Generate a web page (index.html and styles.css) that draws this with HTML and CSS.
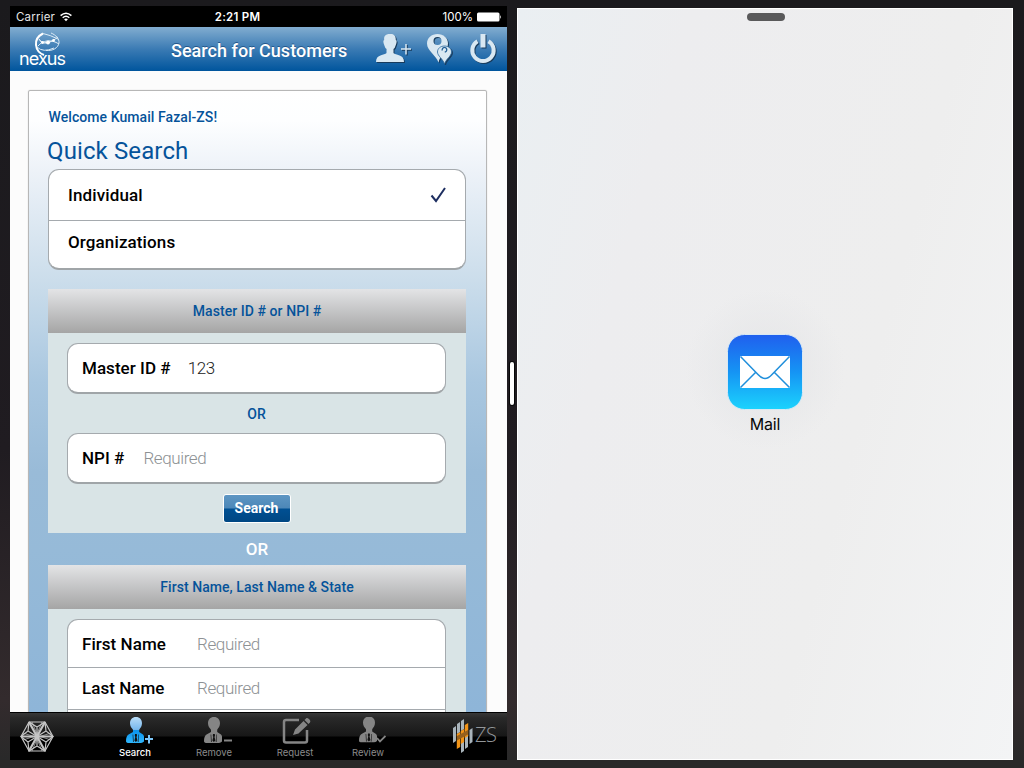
FILE: index.html
```html
<!DOCTYPE html>
<html lang="en">
<head>
<meta charset="utf-8">
<title>Search for Customers</title>
<link rel="stylesheet" href="styles.css">
</head>
<body>
<svg class="defs" width="0" height="0">
  <defs>
    <linearGradient id="blue" x1="0" y1="0" x2="0" y2="1"><stop offset="0" stop-color="#b9dcf7"/><stop offset=".48" stop-color="#78b8ee"/><stop offset=".52" stop-color="#0b93ec"/><stop offset="1" stop-color="#2fb5fb"/></linearGradient>
    <symbol id="agent" viewBox="0 0 18 26">
      <path d="M10 0C13.800 0 16 2.500 16 6.300C16 9.300 14.500 11 13.200 12.700V15L17 17.500Q18.500 19 18.500 24Q17 26 15 26H3Q0 26 0 24Q0 19 2.500 17.500L7 15V12.700C5.500 11 4 9.300 4 6.300C4 2.500 6.200 0 10 0Z"/>
      <path d="M6.500 17.500H7.300L8 25H7ZM12.300 17.500H13L12.700 25H11.700Z" fill="#101010" opacity=".7"/><path d="M9 17H10.800L11 18.700L10.500 20L11.400 23.500L9.900 25L8.400 23.500L9.300 20L8.800 18.700Z" fill="#111"/>
    </symbol>
  </defs>
</svg>
<main class="desk">
  <section class="app">
    <div class="status">
      <div class="carrier"><span>Carrier</span>
        <svg width="12" height="10" viewBox="0 0 12 10" fill="none" stroke="#fff" stroke-width="1.500"><path d="M.6 3.600Q6-1.200 11.400 3.600M2.700 5.700Q6 2.800 9.300 5.700"/><path d="M4.100 7.300Q6 5.800 7.900 7.300L6 9.300Z" fill="#fff" stroke="none"/></svg>
      </div>
      <div class="clock">2:21 PM</div>
      <div class="battery"><span>100%</span>
        <svg width="25" height="10" viewBox="0 0 25 10" fill="#fff"><rect x="0" y="0.500" width="22.500" height="9" rx="1.500"/><path d="M23.200 3Q25 5 23.200 7Z"/></svg>
      </div>
    </div>
    <header class="header">
      <div class="brand">
        <svg class="orbit" width="26" height="24" viewBox="0 0 26 24" fill="none" stroke="#dcebf6" stroke-width="1"><path d="M9 1.500C4 4 1.500 8 2 13C2.500 18 6 21.500 10 23" stroke="#fff" stroke-width="2"/><path d="M17 1C22 3 25.500 7 25 11C24 16 19 19 12 18.500M5 7C8 13 17 11 24 5M4 14C9 8 17 7 25 12M5 7L8 11L14 11L20 8M9 1.500Q16 3 24 7M3 15Q9 21 20 16"/><g fill="#fff" stroke="none"><circle cx="8.500" cy="10.500" r="1.400"/><circle cx="14" cy="10.500" r="1.900"/><circle cx="19.500" cy="8.500" r="1.400"/></g></svg>
        <span>nexus</span>
      </div>
      <h1>Search for Customers</h1>
      <nav class="tools">
        <svg width="37" height="33" viewBox="0 0 37 33" fill="#d9e8f2"><path d="M15 1C19 .5 21 3 20.800 7Q22.500 7.500 20.800 12Q20 15 18.500 16V20Q19 21 24 22.200Q29 23.500 29 29H1Q1 23.500 6 22.200Q11 21 11.500 20V16Q10 15 9.200 12Q7.500 7.500 9.200 7C8.800 3.500 10 1 15 1Z"/><path d="M26 16H36M31 11V21.500" stroke="#d9e8f2" stroke-width="1.500"/></svg>
        <svg width="27" height="33" viewBox="0 0 27 33" fill="#d9e8f2"><path fill-rule="evenodd" d="M11.500 1C17.500 1 22 5 22 10.500C22 17 14 22 12.500 29.500C10 22 1 18 1 10.500C1 5 5.500 1 11.500 1ZM11.500 4A4 4 0 1 0 11.500 12A4 4 0 1 0 11.500 4Z"/><path d="M18.500 13C22.500 13 25.500 15.500 25.500 19C25.500 23 20 26 18.500 31C17 26 11.500 23 11.500 19C11.500 15.500 14.500 13 18.500 13Z" stroke="#2b679c" stroke-width=".8"/><path d="M16.300 17.500A2.300 2.300 0 1 1 18.800 19" fill="none" stroke="#225f96" stroke-width="1.300"/></svg>
        <svg width="28" height="33" viewBox="0 0 28 33" fill="none" stroke="#d9e8f2" stroke-width="4"><path d="M8.500 8.200A10.700 10.700 0 1 0 19.500 8.200"/><path d="M14 1V14.500" stroke-width="5"/></svg>
      </nav>
    </header>
    <div class="page">
      <div class="card">
        <p class="welcome">Welcome Kumail Fazal-ZS!</p>
        <h2>Quick Search</h2>
        <div class="box choices">
          <div class="choice first"><span>Individual</span>
            <svg width="16" height="16" viewBox="0 0 16 16" fill="none" stroke="#1d2e60" stroke-width="2"><path d="M1.500 8.500L6 14L15 1"/></svg></div>
          <div class="choice"><span>Organizations</span></div>
        </div>
        <h3 class="band">Master ID # or NPI #</h3>
        <div class="panel ids">
          <label class="box field"><b>Master ID #</b><span class="value">123</span></label>
          <p class="or">OR</p>
          <label class="box field"><b>NPI #</b><span class="hint">Required</span></label>
          <button class="search">Search</button>
        </div>
        <p class="or-big">OR</p>
        <h3 class="band">First Name, Last Name &amp; State</h3>
        <div class="panel names">
          <div class="box list">
            <div class="row tall"><b>First Name</b><span class="hint">Required</span></div>
            <div class="row"><b>Last Name</b><span class="hint">Required</span></div>
            <div class="row"></div>
          </div>
        </div>
      </div>
    </div>
    <footer class="tabs">
      <svg class="emblem" width="34" height="31" viewBox="0 0 34 31" fill="none" stroke="#c4c4c4" stroke-width="1.200"><path d="M9 1H25L33 15.500L25 30H9L1 15.500Z"/><path d="M9 1L25 30M25 1L9 30M1 15.500H33" stroke-width="2.200"/><path d="M9 1L17 6L25 1M25 1L26 10L33 15.500L26 21L25 30L17 25L9 30L8 21L1 15.500L8 10L9 1M17 6V15.500M17 25V15.500M26 10L17 15.500L26 21M8 10L17 15.500L8 21"/><path d="M12 1L17 13L22 1M12 30L17 18L22 30M3 12L14 15.500L3 19M31 12L20 15.500L31 19" stroke-width=".7"/></svg>
      <div class="tab active">
        <svg width="36" height="27" viewBox="0 0 36 27"><use href="#agent" width="18" height="26" x="9" fill="url(#blue)"/><path d="M28 22H36M32 18V26.500" stroke="#7cc5f7" stroke-width="2"/></svg><span>Search</span></div>
      <div class="tab">
        <svg width="36" height="27" viewBox="0 0 36 27"><use href="#agent" width="18" height="26" x="8" fill="#858585"/><path d="M28 23.500H36" stroke="#858585" stroke-width="2"/></svg><span>Remove</span></div>
      <div class="tab">
        <svg width="34" height="27" viewBox="0 0 34 27" fill="none" stroke="#858585" stroke-width="2.500"><path d="M21 3H8Q6 3 6 5V23.500Q6 25.500 8 25.500H27Q29 25.500 29 23.500V13"/><path d="M15 18L17 12.500L25.500 4L29.500 8L20.500 16.500ZM26.500 3L28.500 1Q30 .5 31.500 2.500Q33 4 32 5.500L30.500 7Z" fill="#858585" stroke="none"/></svg><span>Request</span></div>
      <div class="tab">
        <svg width="36" height="27" viewBox="0 0 36 27"><use href="#agent" width="18" height="26" x="9" y="-.5" fill="#858585"/><path d="M27 21L30 24.500L35.500 19" fill="none" stroke="#858585" stroke-width="1.800"/></svg><span>Review</span></div>
      <div class="zs">
        <svg width="22" height="36" viewBox="0 0 22 36"><path d="M1 10L4 8V23L1 25ZM5 6L8 4V14L5 16ZM9 3L12 1V11L9 13ZM17.500 12L20.500 10V24L17.500 26ZM13 19L16 17V29L13 31ZM9 25L12 23V33L9 35Z" fill="#a9b4bb"/><path d="M4.800 16L8.200 14V29L4.800 31ZM12.800 7L16.200 5V18L12.800 20ZM8.800 13L12.200 11V24L8.800 26Z" fill="#f29417"/><path d="M5 18L16 12V16.500L5 22.500Z" fill="#96601d"/></svg>
        <span>ZS</span>
      </div>
    </footer>
  </section>
  <div class="divider"><i></i></div>
  <section class="side">
    <i class="grab"></i>
    <svg class="mail" width="76" height="76" viewBox="0 0 76 76">
      <defs><linearGradient id="sky" x1="0" y1="0" x2="0" y2="1"><stop offset="0" stop-color="#205fee"/><stop offset=".5" stop-color="#1594f4"/><stop offset="1" stop-color="#1cd3fd"/></linearGradient></defs>
      <rect x=".5" y=".5" width="75" height="75" rx="17" fill="url(#sky)" stroke="#d8e9f4"/>
      <rect x="13" y="22" width="50" height="32" rx="1" fill="#fff"/>
      <path d="M13.500 22.500L31 40.500Q38 48.500 45 40.500L62.500 22.500M13.500 53.500L28.500 38.500M62.500 53.500L47.500 38.500" fill="none" stroke="#208fdb" stroke-width="1.500"/>
    </svg>
    <span class="mail-name">Mail</span>
  </section>
</main>
</body>
</html>
```
FILE: styles.css
```css
* { box-sizing: border-box; }
body { margin: 0; font-family: Roboto, "Liberation Sans", sans-serif; background: #1b1a1e; }
h1, h2, h3, p { margin: 0; font-weight: 500; }
svg { display: block; flex: none; }
.defs { position: absolute; }
.desk { width: 1024px; height: 768px; overflow: hidden; padding: 6px 11px 8px 10px; display: flex; background: linear-gradient(#1b1a1d 0, #201c21 450px, #332b2d 700px, #292929 760px); }
.app { width: 497px; height: 754px; display: flex; flex-direction: column; background: #fcfcfc; overflow: hidden; }

.status { height: 21px; flex: none; display: flex; justify-content: space-between; align-items: center; padding: 1px 6px 0; background: #000; color: #fff; font: 11.500px Inter, sans-serif; }
.carrier, .battery { display: flex; align-items: center; width: 100px; }
.carrier { gap: 5px; font-size: 11.500px; letter-spacing: .2px; color: #e4e4e4; }
.clock { font-weight: 600; font-size: 11.500px; letter-spacing: .25px; padding-right: 43px; }
.battery { justify-content: flex-end; gap: 4px; margin-right: -1px; letter-spacing: 0; }

.header { height: 44px; flex: none; display: flex; align-items: center; background: linear-gradient(#82add0 0, #3b7bb4 50%, #00559d); }
.brand { width: 67px; height: 44px; padding: 5px 0 0 9px; color: #fff; font: 18px/18px Inter, sans-serif; }
.orbit { margin-left: 15px; }
.brand span { display: block; margin-top: -6px; letter-spacing: -.9px; }
.header h1 { width: 192px; margin-left: 94px; padding-top: 3px; color: #fff; font-size: 18px; line-height: 22px; letter-spacing: .03px; white-space: nowrap; text-shadow: 0 -1px 0 #24578a; }
.tools { display: flex; gap: 14px; padding: 0 0 0 12px; filter: drop-shadow(1px 1px 0 #183b5c); }
.tools svg:nth-child(2) { margin-right: 2px; }

.page { flex: 1; min-height: 0; overflow: hidden; padding: 19px 20px 0 18px; }
.card { height: 900px; width: 459px; padding: 18px 20px 0 19px; border: 1px solid #b7b7b7; border-radius: 2px; box-shadow: 0 0 1px #b7b7b7; background: linear-gradient(#fff 0, #fdfeff 30px, #edf2f8 80px, #cbddeb 190px, #a9c7e0 290px, #99bbd8 380px, #96bad8 460px, #8eb5d8 620px); }
.welcome { color: #05539a; font-size: 14px; line-height: 16px; letter-spacing: .07px; padding-left: .5px; }
.card h2 { color: #05539a; font-size: 24px; line-height: 28px; font-weight: 400; margin: 12px 0 4px -1px; letter-spacing: .12px; }
.box { background: #fff; border: 1px solid #a5aaae; border-bottom: 2px solid #a0a5a8; border-radius: 11px; }
.choices { height: 101px; }
.choice { height: 46px; display: flex; align-items: center; justify-content: space-between; padding: 0 19px 4px; font-size: 17px; font-weight: 500; letter-spacing: .12px; }
.choice.first { height: 51px; padding-bottom: 0; border-bottom: 1px solid #a5aaae; }
.band { height: 44px; display: grid; place-items: center; background: linear-gradient(#e3e4e6, #a5a5a5); color: #05539a; font-size: 14px; letter-spacing: .06px; }
.choices + .band { margin-top: 19px; }
.panel { background: #d9e4e6; padding: 10px 20px 0 19px; }
.ids { height: 200px; }
.field { height: 51px; display: flex; align-items: center; padding-left: 14px; font-size: 17px; }
.field b, .row b { font-weight: 500; letter-spacing: .04px; }
.field span { margin-left: 19px; }
.value, .hint { font-weight: 300; letter-spacing: -.4px; }
.field .value { color: #222; margin-left: 17px; }
.hint { color: #8d9194; }
.or { height: 39px; line-height: 41px; text-align: center; color: #05539a; font-size: 14px; }
.search { display: block; width: 68px; height: 29px; margin: 10px auto 0; padding: 0 0 1px; border: 1px solid #fff; border-radius: 3px; background: linear-gradient(#5e96c3 0, #4c87b8 49%, #005093 51%, #004783); color: #fff; font: 700 14px Roboto, sans-serif; }
.or-big { height: 32px; line-height: 32px; text-align: center; font-size: 17px; color: #fff; }
.names { height: 300px; }
.list { height: 200px; font-size: 17px; }
.row { height: 42px; display: flex; align-items: center; padding: 0 0 2px 14px; border-bottom: 1px solid #a5aaae; }
.row b { width: 115px; }
.row.tall { height: 48px; padding-bottom: 0; }

.tabs { height: 48px; flex: none; display: flex; background: linear-gradient(#000 0, #000 1px, #373737 1px, #292929 6px, #171717 24px, #000 25px); }
.emblem { margin: 9px 0 0 10px; }
.tab { width: 78px; padding-top: 5px; display: flex; flex-direction: column; align-items: center; color: #8b8b8b; font: 9.500px/12px Inter, sans-serif; letter-spacing: 0; }
.tab span { margin-top: 3px; }
.tab.active { color: #fff; margin-left: 42px; font-weight: 500; }
.tab:nth-of-type(2) { margin-left: 1px; }
.tab:nth-of-type(3) { margin-left: 3px; }
.tab:nth-of-type(4) { margin-left: -5px; }
.zs { display: flex; margin-left: 45px; padding-top: 6px; color: #92969a; font: 300 20px/33px "Open Sans", sans-serif; letter-spacing: -.4px; gap: 1px; }

.divider { width: 10px; display: flex; justify-content: center; }
.divider i { width: 4px; height: 43px; margin-top: 356px; background: #fff; border-radius: 2px; box-shadow: 0 0 0 1px #09090a; }
.side { width: 496px; height: 752px; margin-top: 2px; display: flex; flex-direction: column; align-items: center; border: 1px solid #fff; background: radial-gradient(circle at 50% 48%, #e4e5e7 0, #eaebec00 80px), linear-gradient(105deg, #eaeff2 0, #ededef 25%, #eeeeee 65%, #f3f4f5); }
.grab { width: 38px; height: 8px; margin: 4px 0 0 1px; border-radius: 4px; background: #59595a; }
.mail { margin-top: 313px; }
.mail-name { margin-top: 4px; color: #080808; font: 16px/20px Inter, sans-serif; letter-spacing: -.2px; }
```
